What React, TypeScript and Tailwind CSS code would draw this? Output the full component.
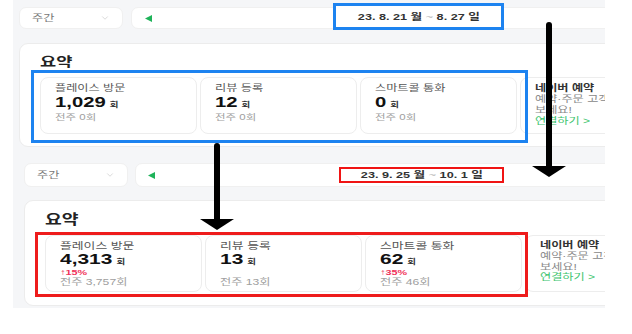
import { ChevronDown } from 'lucide-react';

type Stat = {
  label: string;
  value: string;
  pct?: string;
  prev: string;
};

const week1: Stat[] = [
  { label: '플레이스 방문', value: '1,029', prev: '전주 0회' },
  { label: '리뷰 등록', value: '12', prev: '전주 0회' },
  { label: '스마트콜 통화', value: '0', prev: '전주 0회' },
];

const week2: Stat[] = [
  { label: '플레이스 방문', value: '4,313', pct: '15%', prev: '전주 3,757회' },
  { label: '리뷰 등록', value: '13', prev: '전주 13회' },
  { label: '스마트콜 통화', value: '62', pct: '35%', prev: '전주 46회' },
];

// the screenshot is stretched sideways, so the glyphs are widened to match
const Wide = ({ children, className = '' }: { children: React.ReactNode; className?: string }) => (
  <span className={`block w-max origin-left scale-x-[1.35] whitespace-nowrap ${className}`}>{children}</span>
);

const Triangle = () => (
  <svg width="7" height="7" viewBox="0 0 7 7" className="shrink-0">
    <polygon points="0,3.5 7,0 7,7" fill="#1fb35a" />
  </svg>
);

const Dropdown = ({ h }: { h: string }) => (
  <div className={`flex w-[104px] shrink-0 items-center justify-between rounded-[7px] border border-[#f0f0f0] bg-white pl-[12px] pr-[12px] ${h}`}>
    <Wide className="text-[9px] leading-[10px] text-[#777]">주간</Wide>
    <ChevronDown size={10} strokeWidth={1.5} className="text-[#c4c4c4]" />
  </div>
);

const StatCard = ({ stat, tall }: { stat: Stat; tall?: boolean }) => (
  <div className={`flex h-[57px] w-[157px] shrink-0 flex-col rounded-[8px] border border-[#ededed] bg-white pl-[14px] ${tall ? 'pt-[4px]' : 'pt-[5px]'}`}>
    <Wide className={`${tall ? 'text-[9.5px]' : 'text-[9px]'} leading-[11px] text-[#555]`}>{stat.label}</Wide>
    <Wide className={`${tall ? 'text-[15.5px]' : 'text-[15px]'} font-bold leading-[15px] text-[#111]`}>
      {stat.value}
      <span className="ml-[3px] text-[7px] text-[#333]">회</span>
    </Wide>
    {tall &&
      (stat.pct ? (
        <Wide className="h-[8px] text-[8px] font-bold leading-[8px] text-[#f0325a]">↑{stat.pct}</Wide>
      ) : (
        <div className="h-[8px]" />
      ))}
    <Wide className={`${tall ? 'text-[9px]' : 'text-[8.5px]'} leading-[11px] text-[#a0a0a0]`}>{stat.prev}</Wide>
  </div>
);

const NaverCard = ({ tall }: { tall?: boolean }) => (
  <div className={`flex h-[57px] w-[157px] shrink-0 flex-col rounded-[8px] border border-[#ededed] bg-white pl-[14px] ${tall ? 'pt-[4px]' : 'pt-[5px]'}`}>
    <Wide className="text-[9px] font-bold leading-[11px] text-[#333]">네이버 예약</Wide>
    <Wide className="text-[9px] leading-[11px] text-[#888]">예약·주문 고객을 늘려</Wide>
    <Wide className={`text-[9px] text-[#888] ${tall ? 'leading-[10px]' : 'leading-[11px]'}`}>보세요!</Wide>
    <Wide className="text-[9px] leading-[11px] text-[#3cc46e]">연결하기 &gt;</Wide>
  </div>
);

const DateText = ({ from, to }: { from: string; to: string }) => (
  <span className="inline-block origin-center scale-x-[1.33] whitespace-nowrap text-[9.5px] font-bold leading-[10px] text-[#333]">
    {from} <span className="font-normal text-[#bbb]">~</span> {to}
  </span>
);

const Arrow = ({ x, top, bottom }: { x: number; top: number; bottom: number }) => (
  <svg
    className="pointer-events-none absolute left-0 top-0"
    width="632"
    height="334"
    viewBox="0 0 632 334">
    <line x1={x} y1={top} x2={x} y2={bottom - 8} stroke="#000" strokeWidth="6" strokeLinecap="round" />
    <polygon points={`${x - 17},${bottom - 11} ${x + 17},${bottom - 11} ${x},${bottom}`} fill="#000" />
  </svg>
);

export default function App() {
  return (
    <div className="relative h-[334px] w-[632px] overflow-hidden bg-white font-['Liberation_Sans','Noto_Sans_CJK_KR',sans-serif]">
      <div className="ml-[13px] h-[308px] w-[592px] overflow-hidden bg-[#f5f6f8] pt-[7px]">
        {/* week 1 */}
        <div className="ml-[6px] flex h-[22px] gap-[8px]">
          <Dropdown h="h-[22px]" />
          <div className="flex w-[520px] shrink-0 items-center rounded-[7px] border border-[#f0f0f0] bg-white pl-[13px]">
            <Triangle />
            <div className="-mt-[3px] ml-[181px] flex h-[27px] w-[171px] shrink-0 items-center justify-center border-[3px] border-[#1d83f0] bg-white">
              <DateText from="23. 8. 21 월" to="8. 27 일" />
            </div>
          </div>
        </div>

        <div className="ml-[6px] mt-[14px] h-[104px] w-[640px] rounded-[9px] border border-[#ececec] bg-white pl-[20px] pt-[11px]">
          <Wide className="text-[13px] font-bold leading-[14px] text-[#222]">요약</Wide>
          <div className="mt-[8px] flex gap-[3px]">
            {week1.map((s) => (
              <StatCard key={s.label} stat={s} />
            ))}
            <NaverCard />
          </div>
        </div>

        {/* week 2 */}
        <div className="ml-[11px] mt-[16px] flex h-[24px] gap-[7px]">
          <Dropdown h="h-[24px]" />
          <div className="flex w-[520px] shrink-0 items-center rounded-[7px] border border-[#f0f0f0] bg-white pl-[12px]">
            <Triangle />
            <div className="ml-[184px] flex h-[16px] w-[165px] shrink-0 items-center justify-center border-[2px] border-[#f01414] bg-white">
              <DateText from="23. 9. 25 월" to="10. 1 일" />
            </div>
          </div>
        </div>

        <div className="ml-[11px] mt-[13px] h-[106px] w-[640px] rounded-[9px] border border-[#ececec] bg-white pl-[20px] pt-[12px]">
          <Wide className="text-[13.5px] font-bold leading-[14px] text-[#222]">요약</Wide>
          <div className="mt-[8px] flex gap-[3px]">
            {week2.map((s) => (
              <StatCard key={s.label} stat={s} tall />
            ))}
            <NaverCard tall />
          </div>
        </div>
      </div>

      {/* annotation boxes */}
      <div className="pointer-events-none absolute left-[31px] top-[70px] h-[73px] w-[497px] border-[3px] border-[#1d83f0]" />
      <div className="pointer-events-none absolute left-[35px] top-[232px] h-[65px] w-[493px] border-[3px] border-[#ee1c1c]" />

      <Arrow x={549} top={25} bottom={177} />
      <Arrow x={217} top={146} bottom={230} />
    </div>
  );
}
